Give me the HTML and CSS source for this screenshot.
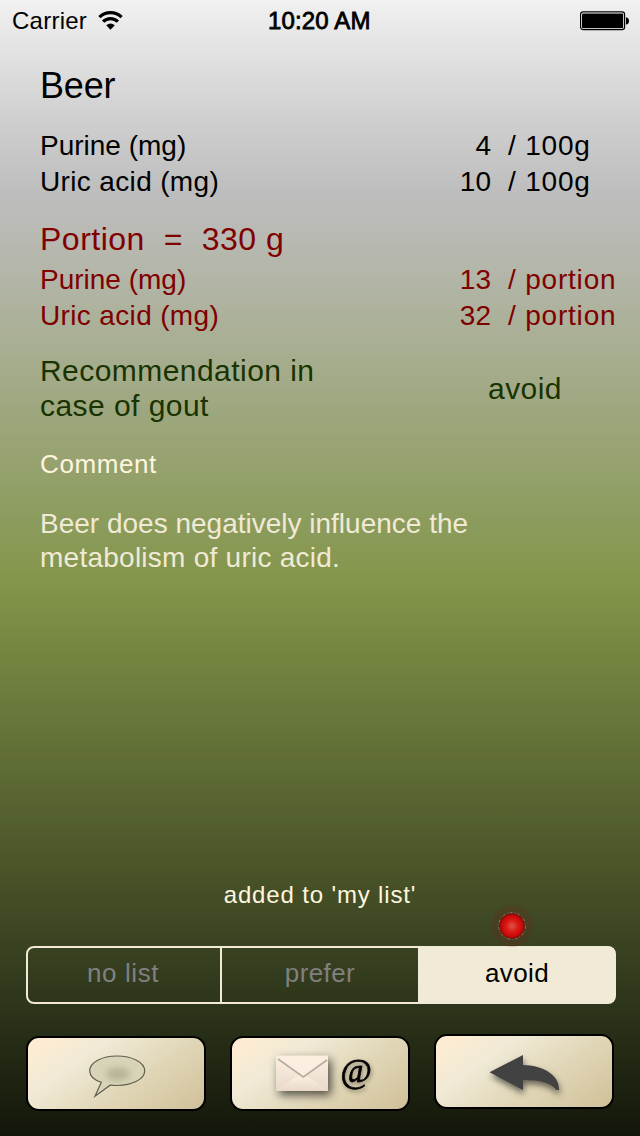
FILE: index.html
```html
<!DOCTYPE html>
<html lang="en">
<head>
<meta charset="utf-8">
<title>Beer</title>
<link rel="stylesheet" href="styles.css">
</head>
<body>
<div class="screen">
  <header class="status">
    <div class="network"><span class="carrier">Carrier</span>
      <svg class="wifi" width="25" height="20" viewBox="0 0 25 20"><g fill="none" stroke="#000" stroke-width="3.2"><path d="M1.4 6.2A16 16 0 0 1 23.6 6.2"/><path d="M5.1 10.6A10.5 10.5 0 0 1 19.9 10.6"/></g><path d="M8.2 14.3Q12.5 10.6 16.8 14.3L12.5 18.8Z"/></svg>
    </div>
    <span class="clock">10:20 AM</span>
    <svg class="battery" width="50" height="20" viewBox="0 0 50 20"><rect x=".6" y=".9" width="44" height="17.8" rx="2.6" fill="#fff" stroke="#000" stroke-width="1.2"/><rect x="2" y="2.4" width="41.2" height="14.8" rx="1"/><path d="M46 6.2Q49 6.7 49 10T46 13.5Z"/></svg>
  </header>
  <h1 class="title">Beer</h1>
  <section class="facts">
    <div class="row"><span class="purine">Purine (mg)</span><span class="amount">4</span><span class="unit">/ 100g</span></div>
    <div class="row"><span class="uric">Uric acid (mg)</span><span class="amount">10</span><span class="unit">/ 100g</span></div>
  </section>
  <section class="facts portion">
    <h2 class="serving">Portion&nbsp; =&nbsp; 330 g</h2>
    <div class="row"><span class="purine">Purine (mg)</span><span class="amount">13</span><span class="unit">/ portion</span></div>
    <div class="row"><span class="uric">Uric acid (mg)</span><span class="amount">32</span><span class="unit">/ portion</span></div>
  </section>
  <section class="advice"><p class="question">Recommendation in<br>case of gout</p><span class="verdict">avoid</span></section>
  <h3 class="heading">Comment</h3>
  <p class="comment">Beer does negatively influence the<br><span class="wide">metabolism of uric acid.</span></p>
  <p class="notice">added to 'my list'</p>
  <div class="segments">
    <div class="segment first">no list</div>
    <div class="segment">prefer</div>
    <div class="segment selected">avoid
      <svg class="marker" width="44" height="44" viewBox="0 0 44 44"><defs><radialGradient id="red"><stop offset="0" stop-color="#dc5548"/><stop offset=".5" stop-color="#dc1712"/><stop offset=".8" stop-color="#c90b08"/><stop offset="1" stop-color="#870b08"/></radialGradient></defs><circle cx="22" cy="22" r="21" fill="#7c1c18" opacity=".18"/><circle cx="22" cy="22" r="13.3" fill="#502719" stroke="#85837a" stroke-width="1" stroke-dasharray="3 2 1 1.5"/><circle cx="22" cy="22" r="12.6" fill="url(#red)"/></svg>
    </div>
  </div>
  <nav class="actions">
    <button class="action" aria-label="Comment">
      <svg width="176" height="72" viewBox="28 1038 176 72"><defs><filter id="soft" x="-50%" y="-50%" width="200%" height="200%"><feGaussianBlur stdDeviation="3"/></filter></defs><path d="M101.3 1082.3C94 1080 89.7 1076 89.7 1070.8C89.7 1062.3 102 1056 117 1056S144.7 1062.3 144.7 1070.8S132 1085.5 117 1085.5Q113.5 1085.5 110.5 1085L95 1096.3Z" fill="#d8d4b7" stroke="#605e50" stroke-width="1.2"/><ellipse cx="118" cy="1074" rx="12" ry="6.5" fill="#aaa78d" opacity=".72" filter="url(#soft)"/></svg>
    </button>
    <button class="action" aria-label="Mail">
      <svg width="176" height="72" viewBox="232 1038 176 72"><defs><linearGradient id="paper" x2="0" y2="1"><stop stop-color="#fdf0e2"/><stop offset="1" stop-color="#e7d8ca"/></linearGradient><linearGradient id="fold" x2="0" y2="1"><stop stop-color="#fcefe2"/><stop offset="1" stop-color="#ead9ca"/></linearGradient></defs><g class="envelope"><path d="M276 1055.5H328V1091H276Z" fill="url(#paper)"/><path d="M276 1091L295.5 1077Q302 1073 308.5 1077L328 1091Z" fill="url(#fold)"/><path d="M277.5 1058L303.3 1078L328 1060V1056H276Z" fill="#fbeee0"/><path d="M278 1059L303.3 1077L327 1060" fill="none" stroke="#b8aca0" stroke-width="1.6"/></g><text class="at" x="340.5" y="1082">@</text></svg>
    </button>
    <button class="action raised" aria-label="Back">
      <svg width="176" height="72" viewBox="436 1036 176 72"><path class="arrow" d="M489.5 1072.3L523 1055V1065C542 1065.5 559.5 1074 559 1090H556.5C551 1083 541 1080 523 1080V1090Z"/></svg>
    </button>
  </nav>
</div>
</body>
</html>
```
FILE: styles.css
```css
* { box-sizing: border-box; }
body { margin: 0; font-family: "Liberation Sans", Arial, sans-serif; }
h1, h2, h3, p { margin: 0; font-weight: 400; }
.screen { width: 640px; height: 1136px; overflow: hidden; display: flex; flex-direction: column; color: #000; background: linear-gradient(#f1f1f1 0, #cfcfcf 120px, #bdbdbd 195px, #bcbcbb 210px, #a9af94 340px, #8b9b5b 528px, #839549 584px, #495429 870px, #2c341a 1010px, #13160a 1136px); }
.status { height: 40px; display: grid; grid-template-columns: 1fr 104px 1fr; align-items: center; padding: 1px 10px 0 12px; font-size: 24px; line-height: 40px; }
.network { display: flex; align-items: center; gap: 10px; }
.carrier { width: 76px; letter-spacing: .25px; }
.clock { font-size: 24px; letter-spacing: .15px; -webkit-text-stroke: .8px #000; white-space: nowrap; margin-left: -1px; }
.battery { justify-self: end; }
.title { margin: 26px 0 0 40px; font-size: 36px; line-height: 40px; letter-spacing: -.2px; }
.facts { margin: 22px 0 0 40px; font-size: 28px; line-height: 36px; }
.row { display: grid; grid-template-columns: 360px 91px 1fr; height: 36px; }
.amount { text-align: right; }
.unit { padding-left: 17px; letter-spacing: .8px; }
.purine { letter-spacing: 0; }
.uric { letter-spacing: .35px; }
.portion { margin-top: 19px; color: #800000; }
.serving { margin-bottom: 3px; font-size: 32px; line-height: 40px; letter-spacing: .5px; }
.advice { margin: 19px 0 0 40px; display: grid; grid-template-columns: 448px 1fr; align-items: center; font-size: 30px; line-height: 35px; color: #193300; letter-spacing: .45px; }
.heading { margin: 26px 0 0 40px; font-size: 26px; line-height: 30px; color: #fff5df; letter-spacing: .6px; }
.comment { margin: 28px 0 0 40px; font-size: 28px; line-height: 34px; color: #f0ead6; }
.wide { letter-spacing: .25px; }
.notice { margin-top: 306px; font-size: 24px; line-height: 28px; color: #fff5df; text-align: center; letter-spacing: .85px; }
.segments { margin: 37px 24px 0 26px; height: 58px; display: grid; grid-template-columns: 192px 198px 1fr; border: 2px solid #f0ead6; border-radius: 8px; font-size: 26px; line-height: 50px; text-align: center; color: #808080; }
.segment { letter-spacing: .4px; }
.first { letter-spacing: .6px; padding-right: 2px; }
.segment + .segment { border-left: 2px solid #f0ead6; }
.selected { position: relative; background: #f0ead6; color: #000; }
.marker { position: absolute; left: 70px; top: -44px; }
.actions { margin: 32px 26px 0; display: flex; gap: 24px; }
.action { width: 180px; height: 75px; padding: 0; border: 2px solid #000; border-radius: 13px; background: linear-gradient(145deg, #ffecd2 5%, #f0ead6 30%, #e1d7b8 60%, #d0c099 100%); }
.action svg { display: block; }
.raised { margin-top: -2px; }
.envelope { filter: drop-shadow(3px 4px 5px rgba(0, 0, 0, .65)); }
.at { font: 34px "Liberation Serif", serif; stroke: #000; stroke-width: .8px; filter: drop-shadow(1px 2px 2px rgba(0, 0, 0, .4)); }
.arrow { fill: #424242; filter: drop-shadow(1px 4px 3px rgba(0, 0, 0, .55)); }
```
